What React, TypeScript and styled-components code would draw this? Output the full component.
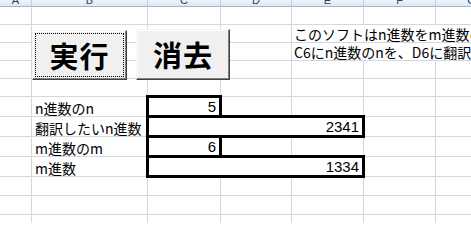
import React from 'react';
import styled, { createGlobalStyle } from 'styled-components';

const COLS = [32, 116, 73, 71, 72, 72, 72];
const ROWS = [7, 18, 18, 18, 18, 18, 20, 20, 20, 20, 19, 19, 19];
const LETTERS = ['A', 'B', 'C', 'D', 'E', 'F', 'G'];

const GlobalStyle = createGlobalStyle`
  html, body {
    margin: 0;
    padding: 0;
    background: #fff;
    overflow: hidden;
  }
  body {
    font-family: "Noto Sans CJK JP", "Noto Sans", sans-serif;
    color: #000;
  }
`;

const Sheet = styled.div`
  position: relative;
  width: 471px;
  height: 223px;
  overflow: hidden;
  display: grid;
  grid-template-columns: ${COLS.map((c) => `${c}px`).join(' ')};
  grid-template-rows: ${ROWS.map((r) => `${r}px`).join(' ')};
`;

const ColHeader = styled.div`
  box-sizing: border-box;
  grid-row: 1;
  background: linear-gradient(#eef3fa, #dfe7f2);
  border-right: 1px solid #c5d2e3;
  border-bottom: 1px solid #9eb6ce;
  display: flex;
  align-items: flex-end;
  justify-content: center;
  overflow: hidden;

  span {
    font: 11px/12px "Liberation Sans", Arial, sans-serif;
    color: #27415f;
  }
`;

const Cell = styled.div`
  box-sizing: border-box;
  border-right: 1px solid #d0d7e5;
  border-bottom: 1px solid #d0d7e5;
`;

const Label = styled.div<{ $row: number }>`
  grid-row: ${(p) => p.$row};
  grid-column: 2;
  display: flex;
  align-items: flex-end;
  padding: 0 0 0 3px;
  font-size: 14px;
  line-height: 17px;
  white-space: nowrap;
  overflow: hidden;
`;

const ValueBox = styled.div<{ $row: number; $span: number }>`
  box-sizing: border-box;
  grid-row: ${(p) => p.$row};
  grid-column: 3 / span ${(p) => p.$span};
  margin: -2px -1px -1px -2px;
  border: 3px solid #000;
  background: #fff;
  display: flex;
  align-items: flex-end;
  justify-content: flex-end;
  padding: 0 3px 0 0;
  font: 15px/16px "Liberation Sans", Arial, sans-serif;
`;

const Note = styled.div<{ $row: number }>`
  box-sizing: border-box;
  grid-row: ${(p) => p.$row};
  grid-column: 5 / span 3;
  background: #fff;
  border-bottom: 1px solid #d0d7e5;
  display: flex;
  align-items: flex-end;
  padding: 0 0 0 2px;
  font-size: 14px;
  line-height: 16px;
  white-space: nowrap;
  overflow: hidden;
`;

const MacroButton = styled.button<{ $x: number; $y: number; $w: number; $h: number; $focused?: boolean }>`
  position: absolute;
  left: ${(p) => p.$x}px;
  top: ${(p) => p.$y}px;
  width: ${(p) => p.$w}px;
  height: ${(p) => p.$h}px;
  box-sizing: border-box;
  margin: 0;
  padding: 0;
  background: #f0f0f0;
  border: 1px solid;
  border-color: #f4f4f4 #404040 #404040 #f4f4f4;
  box-shadow: inset -1px -1px 0 #808080, inset 1px 1px 0 #ffffff;
  display: flex;
  align-items: center;
  justify-content: center;
  font: 700 29px/1 "Noto Sans CJK JP", sans-serif;
  color: #000;
  letter-spacing: 1px;

  &::after {
    content: '';
    display: ${(p) => (p.$focused ? 'block' : 'none')};
    position: absolute;
    inset: 2px;
    border: 1px dotted #000;
  }
`;

const labels = ['n進数のn', '翻訳したいn進数', 'm進数のm', 'm進数'];
const values = [
  { value: '5', span: 1 },
  { value: '2341', span: 3 },
  { value: '6', span: 1 },
  { value: '1334', span: 3 },
];

export default function App() {
  const cells = [];
  for (let r = 2; r <= ROWS.length; r++) {
    for (let c = 1; c <= COLS.length; c++) {
      cells.push(<Cell key={`${r}-${c}`} style={{ gridRow: r, gridColumn: c }} />);
    }
  }

  return (
    <>
      <GlobalStyle />
      <Sheet>
        {LETTERS.map((l) => (
          <ColHeader key={l}>
            <span>{l}</span>
          </ColHeader>
        ))}
        {cells}

        <Note $row={3}>このソフトはn進数をm進数の</Note>
        <Note $row={4}>C6にn進数のnを、D6に翻訳したいn進数を</Note>

        {labels.map((t, i) => (
          <Label key={t} $row={7 + i}>{t}</Label>
        ))}
        {values.map((v, i) => (
          <ValueBox key={i} $row={7 + i} $span={v.span}>{v.value}</ValueBox>
        ))}

        <MacroButton $x={32} $y={30} $w={95} $h={50} $focused>実行</MacroButton>
        <MacroButton $x={136} $y={29} $w={94} $h={51}>消去</MacroButton>
      </Sheet>
    </>
  );
}
